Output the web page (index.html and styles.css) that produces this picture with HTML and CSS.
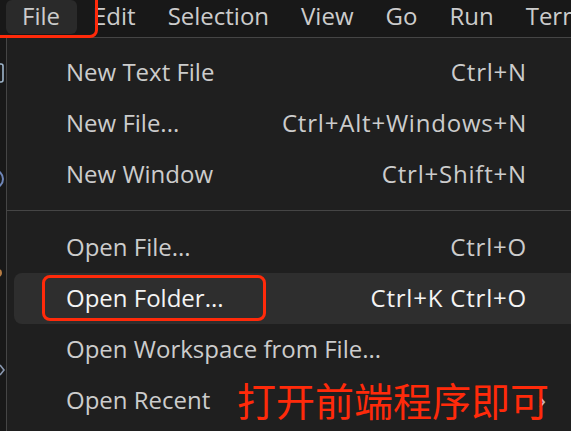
FILE: index.html
```html
<!DOCTYPE html>
<html lang="en">
<head>
  <meta charset="UTF-8"/>
  <title>File menu</title>
  <link rel="stylesheet" href="styles.css">
</head>
<body>

  <div class="menubar">
    <div class="bar-item active">File</div>
    <div class="bar-item">Edit</div>
    <div class="bar-item">Selection</div>
    <div class="bar-item">View</div>
    <div class="bar-item">Go</div>
    <div class="bar-item">Run</div>
    <div class="bar-item">Terminal</div>
    <div class="mark mark-file"></div>
  </div>

  <div class="workbench">
    <div class="activity">
      <svg viewBox="0 0 6 394" width="6" height="394">
        <rect x="-6" y="27" width="9" height="18" rx="2" fill="none" stroke="#9fb6cc" stroke-width="1.6"/>
        <circle cx="-6" cy="142" r="9" fill="none" stroke="#6f86b8" stroke-width="2"/>
        <circle cx="-2" cy="236" r="4" fill="#b77c42"/>
        <path d="M0 328 L4 333 L0 338" fill="none" stroke="#8a98b0" stroke-width="1.6"/>
      </svg>
    </div>

    <div class="menu">
      <div class="row"><span class="label">New Text File</span><span class="key">Ctrl+N</span></div>
      <div class="row"><span class="label">New File...</span><span class="key">Ctrl+Alt+Windows+N</span></div>
      <div class="row"><span class="label">New Window</span><span class="key">Ctrl+Shift+N</span></div>
      <div class="sep"></div>
      <div class="row"><span class="label">Open File...</span><span class="key">Ctrl+O</span></div>
      <div class="row hover">
        <span class="label">Open Folder...</span><span class="key">Ctrl+K Ctrl+O</span>
        <div class="mark mark-folder"></div>
      </div>
      <div class="row"><span class="label">Open Workspace from File...</span><span class="key"></span></div>
      <div class="row">
        <span class="label">Open Recent</span><span class="chev">›</span>
        <div class="note">打开前端程序即可</div>
      </div>
    </div>
  </div>

</body>
</html>
```

FILE: styles.css
```css
:root {
  --titlebar: #181818;
  --menu-bg:  #1f1f1f;
  --border:   #454545;
  --fg:       #cccccc;
  --hover:    #2e2e2e;
  --red:      #ff2a0a;
}
*,*::before,*::after { box-sizing:border-box; margin:0; padding:0 }
body {
  background: var(--titlebar);
  color: var(--fg);
  font-family: 'Open Sans', 'Noto Sans', sans-serif;
  width: 571px;
  height: 431px;
  overflow: hidden;
}
.menubar {
  position: relative;
  height: 37px;
  display: flex;
  align-items: flex-start;
  padding-left: 6px;
  font-size: 24px;
  white-space: nowrap;
}
.bar-item {
  height: 34px;
  line-height: 32px;
  padding: 0 16px;
  border-radius: 6px;
}
.bar-item.active {
  background: #2a2a2a;
  padding-right: 17px;
}
.mark {
  position: absolute;
  border: 3px solid var(--red);
  border-radius: 8px;
  pointer-events: none;
}
.mark-file {
  left: -12px; top: -12px;
  width: 110px; height: 50px;
}
.workbench {
  display: flex;
  height: 394px;
}
.activity {
  width: 6px;
  flex: none;
  overflow: hidden;
}
.menu {
  width: 587px;
  flex: none;
  background: var(--menu-bg);
  border-left: 1px solid var(--border);
  border-top: 1px solid var(--border);
  padding-top: 9px;
  font-size: 24px;
}
.row {
  position: relative;
  height: 51px;
  margin: 0 7px;
  padding: 0 60px 3px 52px;
  display: flex;
  align-items: center;
  justify-content: space-between;
  border-radius: 8px;
  white-space: nowrap;
}
.row.hover {
  background: var(--hover);
  color: #f4f4f4;
}
.key {
  letter-spacing: 0.8px;
  margin-right: -1px;
}
.sep {
  height: 1px;
  background: var(--border);
  margin: 10px 0 11px;
}
.mark-folder {
  left: 28px; top: 2px;
  width: 224px; height: 46px;
}
.chev {
  margin-right: -20px;
  font-size: 26px;
  color: #bbbbbb;
}
.note {
  position: absolute;
  left: 223px; top: 2px;
  font-family: 'Noto Sans CJK SC', sans-serif;
  font-size: 39px;
  line-height: 44px;
  color: var(--red);
}
```
